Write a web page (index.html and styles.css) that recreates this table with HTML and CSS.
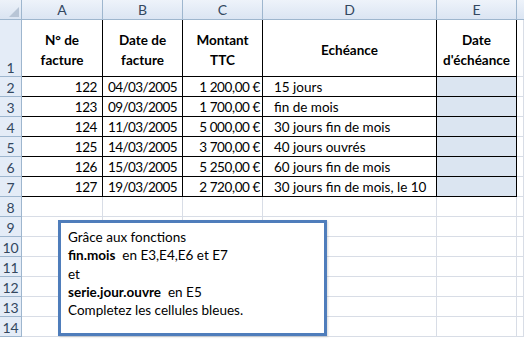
FILE: index.html
```html
<!DOCTYPE html>
<html lang="fr">
<head>
<meta charset="utf-8">
<title>Echéances</title>
<link rel="stylesheet" href="styles.css">
</head>
<body>
<div class="wrap">
  <div class="sheet">
    <div class="corner"><span class="tri"></span></div>
    <div class="ch">A</div><div class="ch">B</div><div class="ch">C</div><div class="ch">D</div><div class="ch">E</div><div class="ch last"></div>

    <div class="rh bottom">1</div>
    <div class="t hd">N° de<br>facture</div>
    <div class="t hd">Date de<br>facture</div>
    <div class="t hd">Montant<br>TTC</div>
    <div class="t hd">Echéance</div>
    <div class="t hd">Date<br>d'échéance</div>
    <div class="c"></div>

    <div class="rh">2</div><div class="t r num">122</div><div class="t m">04/03/2005</div><div class="t r">1 200,00 €</div><div class="t l">15 jours</div><div class="t b"></div><div class="c"></div>
    <div class="rh">3</div><div class="t r num">123</div><div class="t m">09/03/2005</div><div class="t r">1 700,00 €</div><div class="t l">fin de mois</div><div class="t b"></div><div class="c"></div>
    <div class="rh">4</div><div class="t r num">124</div><div class="t m">11/03/2005</div><div class="t r">5 000,00 €</div><div class="t l">30 jours fin de mois</div><div class="t b"></div><div class="c"></div>
    <div class="rh">5</div><div class="t r num">125</div><div class="t m">14/03/2005</div><div class="t r">3 700,00 €</div><div class="t l">40 jours ouvrés</div><div class="t b"></div><div class="c"></div>
    <div class="rh">6</div><div class="t r num">126</div><div class="t m">15/03/2005</div><div class="t r">5 250,00 €</div><div class="t l">60 jours fin de mois</div><div class="t b"></div><div class="c"></div>
    <div class="rh">7</div><div class="t r num">127</div><div class="t m">19/03/2005</div><div class="t r">2 720,00 €</div><div class="t l">30 jours fin de mois, le 10</div><div class="t b"></div><div class="c"></div>

    <div class="rh">8</div><div class="c"></div><div class="c"></div><div class="c"></div><div class="c"></div><div class="c"></div><div class="c"></div>
    <div class="rh">9</div><div class="c"></div><div class="c"></div><div class="c"></div><div class="c"></div><div class="c"></div><div class="c"></div>
    <div class="rh">10</div><div class="c"></div><div class="c"></div><div class="c"></div><div class="c"></div><div class="c"></div><div class="c"></div>
    <div class="rh">11</div><div class="c"></div><div class="c"></div><div class="c"></div><div class="c"></div><div class="c"></div><div class="c"></div>
    <div class="rh">12</div><div class="c"></div><div class="c"></div><div class="c"></div><div class="c"></div><div class="c"></div><div class="c"></div>
    <div class="rh">13</div><div class="c"></div><div class="c"></div><div class="c"></div><div class="c"></div><div class="c"></div><div class="c"></div>
    <div class="rh">14</div><div class="c"></div><div class="c"></div><div class="c"></div><div class="c"></div><div class="c"></div><div class="c"></div>
  </div>

  <div class="note">
    <div class="line">Grâce aux fonctions</div>
    <div class="line"><b>fin.mois</b>  en E3,E4,E6 et E7</div>
    <div class="line">et</div>
    <div class="line"><b>serie.jour.ouvre</b>  en E5</div>
    <div class="line">Completez les cellules bleues.</div>
  </div>
</div>
</body>
</html>
```
FILE: styles.css
```css
html, body {
  margin: 0;
  padding: 0;
  background: #ffffff;
}

.wrap {
  position: relative;
  width: 524px;
  height: 343px;
  overflow: hidden;
  font-family: "Lato", "Open Sans", sans-serif;
  font-size: 13.5px;
  color: #000;
}

.sheet {
  display: grid;
  grid-template-columns: 22px 81px 80px 80px 174px 80px 1fr;
  grid-template-rows: 20px 57px repeat(13, 20px);
}

.sheet > div {
  box-sizing: border-box;
  white-space: nowrap;
  overflow: hidden;
}

.corner {
  position: relative;
  background: linear-gradient(#edf2f9, #dae4f2);
  border-right: 1px solid #9eb6ce;
  border-bottom: 1px solid #9eb6ce;
}

.tri {
  position: absolute;
  right: 2px;
  bottom: 2px;
  width: 0;
  height: 0;
  border-left: 10px solid transparent;
  border-bottom: 10px solid #b8c5d6;
}

.ch {
  display: flex;
  align-items: center;
  justify-content: center;
  background: linear-gradient(#eef3fa, #dbe5f3);
  border-right: 1px solid #9eb6ce;
  border-bottom: 1px solid #9eb6ce;
  color: #33475f;
  font-size: 14px;
}

.ch.last {
  border-right: none;
}

.rh {
  display: flex;
  align-items: center;
  justify-content: center;
  background: #e4ecf7;
  border-right: 1px solid #9eb6ce;
  border-bottom: 1px solid #9eb6ce;
  color: #33475f;
  font-size: 14px;
  padding-top: 1px;
}

.rh.bottom {
  align-items: flex-end;
}

.c {
  border-right: 1px solid #d8dde6;
  border-bottom: 1px solid #d8dde6;
}

.t {
  display: flex;
  align-items: flex-end;
  border-right: 1px solid #000;
  border-bottom: 1px solid #000;
  line-height: 18px;
}

.t.hd {
  align-items: center;
  justify-content: center;
  text-align: center;
  font-weight: bold;
  line-height: 20px;
  padding-top: 3px;
}

.t.r {
  justify-content: flex-end;
  padding-right: 2px;
  letter-spacing: -0.4px;
}

.t.r.num {
  padding-right: 5px;
}

.t.m {
  justify-content: center;
  letter-spacing: -0.6px;
}

.t.l {
  justify-content: flex-start;
  padding-left: 11px;
}

.t.b {
  background: #dbe5f1;
}

.note {
  position: absolute;
  left: 58px;
  top: 220px;
  width: 269px;
  height: 116px;
  box-sizing: border-box;
  border: 3px solid #4f7dbb;
  background: #ffffff;
  padding: 5px 0 0 7px;
  line-height: 18.3px;
  box-shadow: 1px 1px 2px rgba(0, 0, 0, 0.15);
}

.line {
  white-space: pre;
}
```
